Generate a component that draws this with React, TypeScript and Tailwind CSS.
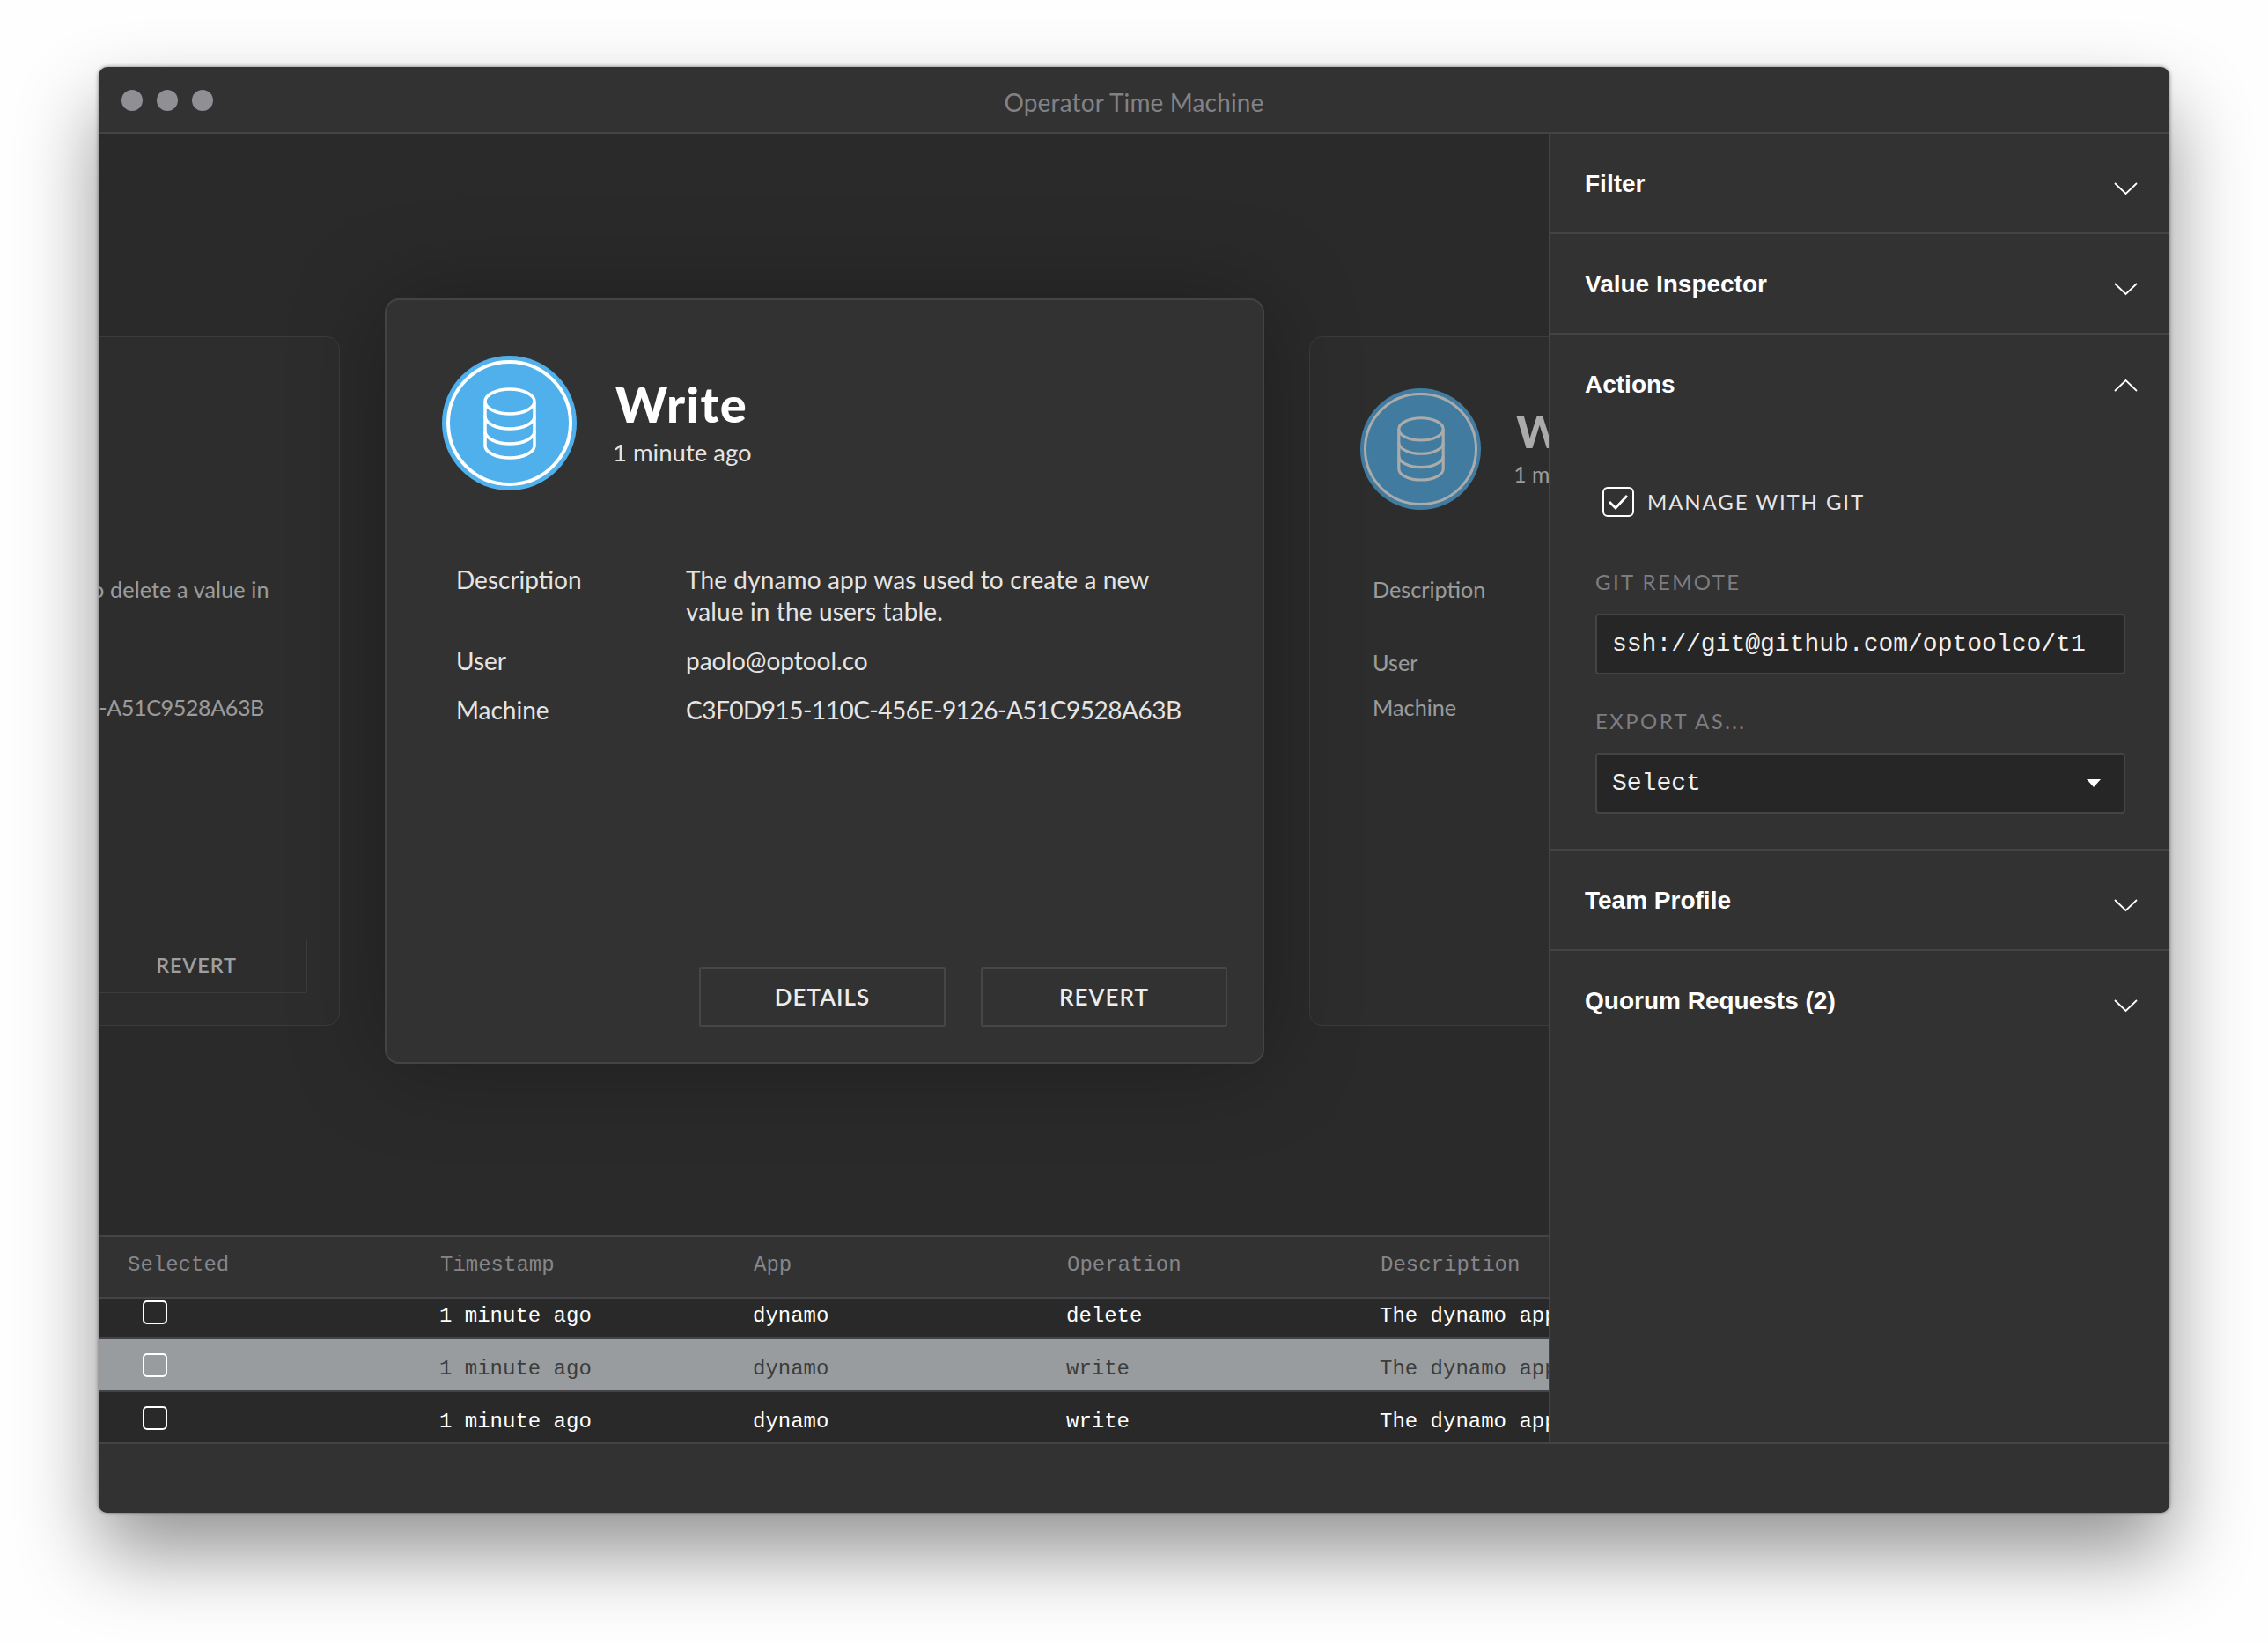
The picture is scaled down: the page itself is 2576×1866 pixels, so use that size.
const bodyFont = "font-['Lato','Open_Sans',sans-serif]";
const monoFont = "font-['Liberation_Mono',monospace]";

function DbIcon() {
  return (
    <svg width="60" height="82" viewBox="0 0 60 82" fill="none" stroke="white" strokeWidth="3.5">
      <ellipse cx="30" cy="16" rx="28" ry="14" />
      <path d="M2 16v50c0 7.7 12.5 14 28 14s28-6.3 28-14V16" />
      <path d="M2 33c0 7.7 12.5 14 28 14s28-6.3 28-14" />
      <path d="M2 50c0 7.7 12.5 14 28 14s28-6.3 28-14" />
    </svg>
  );
}

function EventCard({ title, desc, side }: { title: string; desc: string[]; side?: boolean }) {
  return (
    <div
      className={
        "w-[999px] h-[869px] shrink-0 rounded-[16px] border-2 flex " +
        (side
          ? "[zoom:0.9] bg-[#2d2d2d] border-[#3b3b3b]"
          : "relative z-10 bg-[#323232] border-[#444446] shadow-[0_0_110px_rgba(0,0,0,0.28)]")
      }
    >
      <div
        className={
          "flex-1 flex flex-col pl-[63px] pr-[40px] pb-[40px] " +
          bodyFont +
          (side ? " pt-[64px] opacity-60" : " pt-[63px]")
        }
      >
        <div className="flex items-center gap-[44px]">
          <div className="w-[153px] h-[153px] rounded-full bg-[#4fb0ec] p-[5px] shrink-0">
            <div className="w-full h-full rounded-full border-[4px] border-white flex items-center justify-center">
              <DbIcon />
            </div>
          </div>
          <div className="flex flex-col">
            <div className="text-[56px] leading-[64px] tracking-[1.4px] font-black text-white -mt-[3px]">{title}</div>
            <div className="text-[27.5px] leading-[36px] text-[#e4e4e4] mt-[5px] -ml-[3px]">1 minute ago</div>
          </div>
        </div>

        <div className="mt-[83px] pl-[16px] grid grid-cols-[261px_1fr] gap-y-[20px] text-[28px] leading-[36px] text-[#e4e4e4]">
          <div>Description</div>
          <div className="tracking-[0.12px]">
            {desc.map((line) => (
              <div key={line} className="whitespace-nowrap">{line}</div>
            ))}
          </div>
          <div>User</div>
          <div>paolo@optool.co</div>
          <div>Machine</div>
          <div className="whitespace-nowrap tracking-[-0.5px]">C3F0D915-110C-456E-9126-A51C9528A63B</div>
        </div>

        <div className="mt-auto flex justify-end gap-[40px]">
          <button className="w-[280px] h-[68px] border-2 border-[#464648] rounded-[2px] text-[26px] tracking-[1px] font-semibold text-[#ececec]">DETAILS</button>
          <button className="w-[280px] h-[68px] border-2 border-[#464648] rounded-[2px] text-[26px] tracking-[1px] font-semibold text-[#ececec]">REVERT</button>
        </div>
      </div>
    </div>
  );
}

const columns = ["Selected", "Timestamp", "App", "Operation", "Description"];
const rows = [
  { op: "delete", active: false },
  { op: "write", active: true },
  { op: "write", active: false },
];

function EventTable() {
  return (
    <div className={"shrink-0 text-[24px] " + monoFont}>
      <div className="h-[72px] grid grid-cols-[repeat(5,356px)] items-center bg-[#323232] border-y-2 border-[#444448] text-[#85858a] overflow-hidden">
        {columns.map((c, i) => (
          <div key={c} className={i === 0 ? "pl-[33px] pb-[4px]" : "pl-[32px] pb-[4px]"}>{c}</div>
        ))}
      </div>
      <div className="h-[163px] overflow-hidden bg-[#292929]">
        <div className="-mt-[14px]">
          {rows.map((r, i) => (
            <div
              key={i}
              className={
                "h-[60px] pt-[10px] grid grid-cols-[repeat(5,356px)] items-center border-b-[2px] border-[#444448] overflow-hidden whitespace-nowrap " +
                (r.active ? "bg-[#999c9e] text-[#3c3c3c]" : "text-white")
              }
            >
              <div className="pl-[50px]">
                <div className="w-[28px] h-[27px] mb-[10px] rounded-[5px] border-2 border-white" />
              </div>
              <div className="pl-[31px]">1 minute ago</div>
              <div className="pl-[31px]">dynamo</div>
              <div className="pl-[31px]">{r.op}</div>
              <div className="pl-[31px]">The dynamo app was used</div>
            </div>
          ))}
        </div>
      </div>
    </div>
  );
}

function SectionHead({ label, open }: { label: string; open?: boolean }) {
  return (
    <div className="h-[112px] pt-[2px] shrink-0 flex items-center justify-between pl-[39px] pr-[36px]">
      <span className="font-['Liberation_Sans',sans-serif] font-bold text-[28px] text-white">{label}</span>
      <svg
        className={open ? "" : "mt-[10px]"}
        width="27"
        height="15"
        viewBox="0 0 27 15"
        fill="none"
        stroke="white"
        strokeWidth="1.8"
      >
        <path d={open ? "M1 14L13.5 2 26 14" : "M1 1l12.5 12L26 1"} />
      </svg>
    </div>
  );
}

function Sidebar() {
  const labelCls = "text-[24px] leading-[30px] tracking-[2.4px] text-[#7d7d80] " + bodyFont;
  const fieldCls =
    "h-[69px] rounded-[4px] border-2 border-[#444446] bg-[#262626] flex items-center pl-[17px] pr-[26px] text-[28px] text-[#f0f0f0] " +
    monoFont;
  return (
    <div className="w-[705px] shrink-0 border-l-2 border-[#444448] bg-[#323232] flex flex-col">
      <div className="border-b-2 border-[#444446]">
        <SectionHead label="Filter" />
      </div>
      <div className="border-b-2 border-[#444446]">
        <SectionHead label="Value Inspector" />
      </div>
      <div className="border-b-2 border-[#444446]">
        <SectionHead label="Actions" open />
        <div className="pl-[51px] pr-[50px] pb-[40px] pt-[60px]">
          <div className="h-[36px] flex items-center pl-[8px] gap-[15px]">
            <div className="w-[36px] h-[34px] rounded-[6px] border-2 border-white flex items-center justify-center">
              <svg width="24" height="20" viewBox="0 0 24 20" fill="none" stroke="white" strokeWidth="2.8">
                <path d="M2 10l7 7L22 3" />
              </svg>
            </div>
            <span className={"text-[24px] tracking-[1.9px] text-[#e6e6e6] " + bodyFont}>MANAGE WITH GIT</span>
          </div>
          <div className={"mt-[58px] " + labelCls}>GIT REMOTE</div>
          <div className={"mt-[21px] " + fieldCls}>ssh://git@github.com/optoolco/t1</div>
          <div className={"mt-[38px] " + labelCls}>EXPORT AS...</div>
          <div className={"mt-[21px] justify-between " + fieldCls}>
            <span>Select</span>
            <span className="w-0 h-0 border-x-[8px] border-x-transparent border-t-[9px] border-t-white" />
          </div>
        </div>
      </div>
      <div className="border-b-2 border-[#444446]">
        <SectionHead label="Team Profile" />
      </div>
      <SectionHead label="Quorum Requests (2)" />
    </div>
  );
}

export default function App() {
  return (
    <div className="min-h-screen bg-[#fefefe] pt-[76px] pl-[112px]">
      <div className="w-[2352px] h-[1642px] rounded-[10px] bg-[#323232] overflow-hidden flex flex-col shadow-[0_46px_90px_rgba(0,0,0,0.42),0_0_4px_rgba(0,0,0,0.5)]">
        {/* title bar */}
        <div className="relative h-[76px] shrink-0 flex items-center pl-[26px] gap-[16px] border-b-2 border-[#444448]">
          <div className="w-[24px] h-[24px] rounded-full bg-[#8f8f94] mt-[1px]" />
          <div className="w-[24px] h-[24px] rounded-full bg-[#8f8f94] mt-[1px]" />
          <div className="w-[24px] h-[24px] rounded-full bg-[#8f8f94] mt-[1px]" />
          <div className={"absolute inset-x-0 mt-[5px] text-center text-[28px] tracking-[0.15px] text-[#828286] " + bodyFont}>Operator Time Machine</div>
        </div>

        <div className="flex-1 min-h-0 flex">
          <div className="flex-1 min-w-0 flex flex-col">
            <div className="flex-1 min-h-0 overflow-hidden bg-[#2a2a2a] flex items-center justify-center gap-[51px] pb-[8px] pl-[2px]">
              <EventCard side title="Delete" desc={["The dynamo app was used to delete a value in", "the users table."]} />
              <EventCard title="Write" desc={["The dynamo app was used to create a new", "value in the users table."]} />
              <EventCard side title="Write" desc={["The dynamo app was used to create a new", "value in the users table."]} />
            </div>
            <EventTable />
          </div>
          <Sidebar />
        </div>

        {/* footer */}
        <div className="h-[80px] shrink-0 border-t-2 border-[#444448] bg-[#323232]" />
      </div>
    </div>
  );
}
